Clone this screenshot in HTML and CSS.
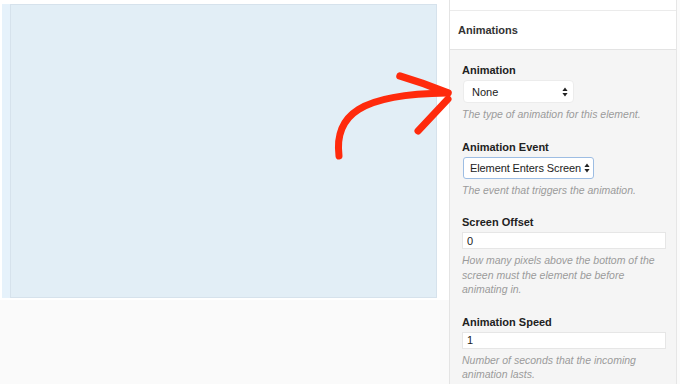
FILE: index.html
```html
<!DOCTYPE html>
<html lang="en">
<head>
  <meta charset="UTF-8" />
  <meta name="viewport" content="width=device-width, initial-scale=1.0"/>
  <title>Animations</title>
  <link rel="stylesheet" href="styles.css">
</head>
<body>
  <div class="page">
    <div class="canvas">
      <div class="block">
        <div class="strip"></div>
        <div class="box"></div>
      </div>
    </div>

    <div class="panel">
      <div class="panel-top"></div>
      <div class="panel-head">Animations</div>
      <div class="panel-body">
        <div class="field">
          <div class="label">Animation</div>
          <div class="select select-none">
            <span>None</span>
            <svg class="arrows" width="6" height="10" viewBox="0 0 6 10"><path d="M3 0.5 L5.6 4 H0.4 Z M3 9.5 L5.6 6 H0.4 Z" fill="#222"/></svg>
          </div>
          <p class="desc">The type of animation for this element.</p>
        </div>

        <div class="field">
          <div class="label">Animation Event</div>
          <div class="select select-event">
            <span>Element Enters Screen</span>
            <svg class="arrows" width="6" height="10" viewBox="0 0 6 10"><path d="M3 0.5 L5.6 4 H0.4 Z M3 9.5 L5.6 6 H0.4 Z" fill="#222"/></svg>
          </div>
          <p class="desc">The event that triggers the animation.</p>
        </div>

        <div class="field">
          <div class="label">Screen Offset</div>
          <input class="text" type="text" value="0" />
          <p class="desc">How many pixels above the bottom of the screen must the element be before animating in.</p>
        </div>

        <div class="field">
          <div class="label">Animation Speed</div>
          <input class="text" type="text" value="1" />
          <p class="desc">Number of seconds that the incoming animation lasts.</p>
        </div>
      </div>
    </div>
  </div>

  <svg class="pointer" width="680" height="384" viewBox="0 0 680 384">
    <g fill="none" stroke="#ff2a0c" stroke-linecap="round" stroke-linejoin="round">
      <path d="M339 156 C 334 115, 360 94, 447 93" stroke-width="7"/>
      <path d="M400 76 Q 424 83, 448 93" stroke-width="7.5"/>
      <path d="M418 131 L 448 99" stroke-width="7"/>
    </g>
  </svg>
</body>
</html>
```

FILE: styles.css
```css
body {
  margin: 0;
  background: #fbfbfb;
  font-family: 'Liberation Sans', Arial, sans-serif;
  color: #222;
}

.page {
  display: flex;
  height: 384px;
  overflow: hidden;
}

.canvas {
  width: 449px;
  padding: 4px 0 0 2px;
  box-sizing: border-box;
  background: linear-gradient(#fff 0, #fff 300px, #fafafa 300px);
}

.block {
  display: flex;
}

.strip {
  width: 8px;
  height: 294px;
  background: #e6f2fb;
}

.box {
  width: 427px;
  height: 294px;
  box-sizing: border-box;
  background: #e2eef6;
  border: 1px solid #d6e2ec;
}

.panel {
  width: 228px;
  box-sizing: border-box;
  background: #f5f5f5;
  border-left: 1px solid #e4e4e4;
  border-right: 1px solid #e6e6e6;
}

.panel-top {
  height: 10px;
  background: #fff;
}

.panel-head {
  height: 38px;
  display: flex;
  align-items: center;
  padding-left: 8px;
  background: #fff;
  border-top: 1px solid #ebebeb;
  border-bottom: 1px solid #e3e3e3;
  font-size: 11px;
  font-weight: bold;
  color: #333;
}

.panel-body {
  padding: 13px 10px 0 12px;
}

.field {
  margin-bottom: 18px;
}

.label {
  font-size: 11px;
  line-height: 14px;
  font-weight: bold;
  color: #222;
  margin-bottom: 3px;
}

.select {
  display: flex;
  align-items: center;
  justify-content: space-between;
  box-sizing: border-box;
  background: #fff;
  font-size: 11px;
  color: #222;
  white-space: nowrap;
}

.arrows {
  flex-shrink: 0;
}

.select-none {
  width: 111px;
  height: 23px;
  margin-left: 1px;
  padding: 0 5px 0 8px;
  border: 1px solid #ececec;
  border-radius: 4px;
}

.select-event {
  width: 131px;
  height: 22px;
  margin-left: 1px;
  padding: 0 3px 0 6px;
  border: 1px solid #9dbde3;
  border-radius: 3px;
  letter-spacing: -0.1px;
}

.text {
  display: block;
  width: 204px;
  height: 17px;
  box-sizing: border-box;
  margin: 0;
  padding: 0 4px;
  border: 1px solid #e6e6e6;
  background: #fff;
  font-family: 'Liberation Sans', Arial, sans-serif;
  font-size: 11px;
  color: #222;
}

.desc {
  margin: 4px 0 0;
  font-size: 10.5px;
  line-height: 14.5px;
  font-style: italic;
  color: #9b9b9b;
}

.pointer {
  position: absolute;
  left: 0;
  top: 0;
  pointer-events: none;
}
```
